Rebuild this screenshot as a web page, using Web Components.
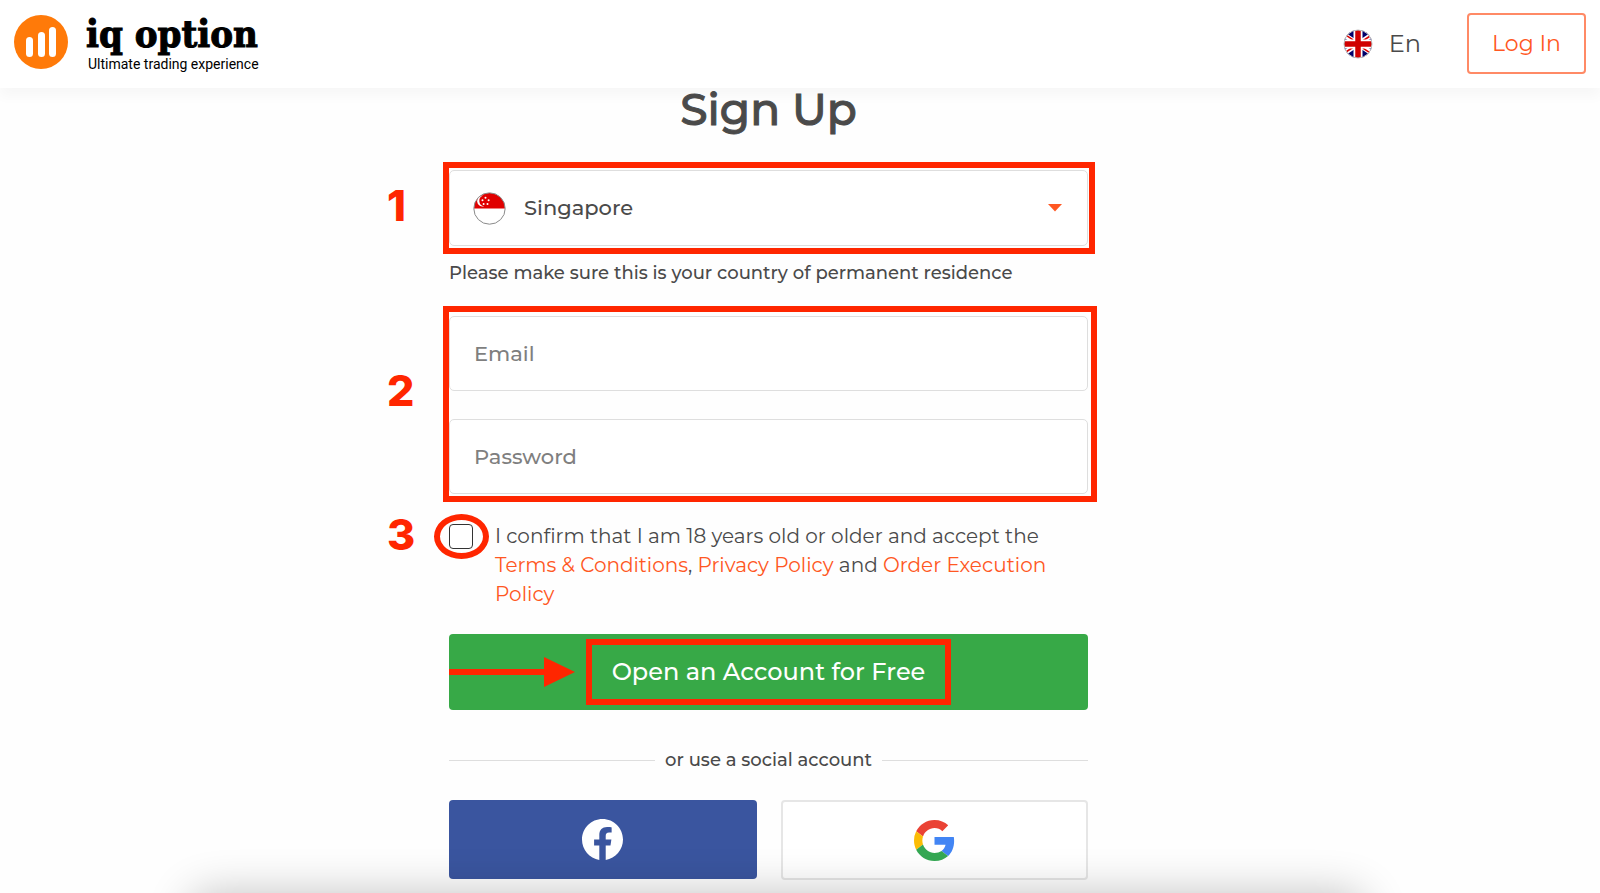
<!DOCTYPE html>
<html lang="en">
<head>
<meta charset="utf-8">
<meta name="viewport" content="width=device-width, initial-scale=1">
<title>Sign Up</title>
<style>
  body {
    --text: #4a4a4a;
    --accent: #ff5722;
    --line: #dedede;
    --mark: #ff2600;
    margin: 0;
    background: #fefefe;
    color: var(--text);
    font-family: Montserrat, Inter, "Open Sans", sans-serif;
    overflow: hidden;
  }
</style>
</head>
<body>
<signup-page></signup-page>

<template id="site-header">
  <style>
    :host {
      display: block;
      background: #fff;
      box-shadow: 0 8px 12px rgba(0, 0, 0, 0.03);
    }
    header {
      display: flex;
      align-items: center;
      justify-content: space-between;
      box-sizing: border-box;
      height: 88px;
      padding: 0 14px 1px;
    }
    .logo {
      display: flex;
      align-items: center;
      gap: 18px;
      color: #000;
      text-decoration: none;
    }
    .logo svg { width: 54px; height: 54px; margin-bottom: 4px; }
    .names { display: flex; flex-direction: column; padding-top: 1px; }
    .word {
      font: bold 38px/40px "DejaVu Serif Condensed", "DejaVu Serif", serif;
      -webkit-text-stroke: 1px #000;
    }
    .tag { font: 14px/20px Roboto, sans-serif; padding-left: 2px; }
    .right { display: flex; align-items: center; gap: 46px; }
    .lang {
      display: flex;
      align-items: center;
      gap: 16px;
      padding: 0;
      border: 0;
      background: none;
      color: inherit;
      font: inherit;
      font-size: 24px;
    }
    .lang svg { width: 30px; height: 30px; }
    .login {
      box-sizing: border-box;
      height: 61px;
      padding: 0 23px;
      border: 2px solid #ff8a66;
      border-radius: 4px;
      color: var(--accent);
      font-size: 22px;
      line-height: 57px;
      text-decoration: none;
    }
  </style>
  <header>
    <a class="logo" href="#">
      <svg viewBox="0 0 54 54" aria-hidden="true">
        <circle cx="27" cy="27" r="27" fill="#ff7a09"/>
        <g fill="#fff">
          <rect x="12" y="22" width="7" height="20" rx="3.5"/>
          <rect x="24" y="17" width="7" height="25" rx="3.5"/>
          <rect x="35" y="12" width="7" height="30" rx="3.5"/>
        </g>
      </svg>
      <span class="names">
        <span class="word">iq option</span>
        <span class="tag">Ultimate trading experience</span>
      </span>
    </a>
    <div class="right">
      <button class="lang" type="button">
        <svg viewBox="0 0 30 30" aria-hidden="true">
          <clipPath id="round"><circle cx="15" cy="15" r="14"/></clipPath>
          <g clip-path="url(#round)">
            <path fill="#00006b" d="M0 0h30v30H0z"/>
            <path stroke="#fff" stroke-width="5" d="M-3 3 33 27M-3 27 33 3"/>
            <path stroke="#d00" stroke-width="1.6" d="M-3 2.200 15 14.200M33 27.800 15 15.800M-3 27 15 15M33 3 15 15"/>
            <path stroke="#fff" stroke-width="9" d="M15 0v30M0 15h30"/>
            <path stroke="#d00000" stroke-width="5.500" d="M15 0v30M0 15h30"/>
          </g>
          <circle cx="15" cy="15" r="14" fill="none" stroke="#bbb"/>
        </svg>
        En
      </button>
      <a class="login" href="#">Log In</a>
    </div>
  </header>
</template>

<!-- Red frame with a step number, drawn over whatever is slotted in -->
<template id="step-mark">
  <style>
    :host { display: block; position: relative; }
    .frame {
      position: absolute;
      inset: -8px -7px -8px -6px;
      border: 6px solid var(--mark);
      pointer-events: none;
    }
    .num {
      position: absolute;
      top: 50%;
      right: 100%;
      width: 62px;
      margin-top: -25px;
      color: var(--mark);
      font: 800 43px/44px Inter, "Liberation Sans", sans-serif;
    }
    :host([tall]) .frame { inset: -10px -9px -8px -6px; }
    :host([tall]) .num { margin-top: -37px; }
    :host([round]) .frame { inset: -10px -16px -10px -15px; border-radius: 50%; }
  </style>
  <slot></slot>
  <span class="frame"></span>
  <span class="num"></span>
</template>

<template id="country-select">
  <style>
    :host {
      display: flex;
      align-items: center;
      box-sizing: border-box;
      height: 76px;
      padding: 0 25px 0 23px;
      gap: 14px;
      border: 1px solid var(--line);
      border-radius: 5px;
      background: #fff;
    }
    .flag { width: 33px; height: 33px; flex: none; }
    .arrow { width: 14px; height: 8px; flex: none; }
    select {
      flex: 1;
      height: 60px;
      padding: 0 4px 2px;
      appearance: none;
      border: 0;
      background: none;
      color: inherit;
      font: inherit;
      font-size: 21px;
      font-weight: 500;
    }
  </style>
  <svg class="flag" viewBox="0 0 33 33" aria-hidden="true">
    <circle cx="16.500" cy="16.500" r="15.500" fill="#fff"/>
    <path fill="#e00000" d="M1 16.500a15.500 15.500 0 0 1 31 0z"/>
    <path fill="#fff" d="M10 3.500a5.500 5.500 0 1 0 1 10.800a5.600 5.600 0 0 1-1-10.800z"/>
    <g fill="#fff">
      <circle cx="12.500" cy="5.800" r="1"/><circle cx="9.500" cy="8.300" r="1"/>
      <circle cx="15.600" cy="8.300" r="1"/><circle cx="10.600" cy="12" r="1"/>
      <circle cx="14.500" cy="12" r="1"/>
    </g>
    <circle cx="16.500" cy="16.500" r="15.700" fill="none" stroke="#8a8a8a"/>
  </svg>
  <select aria-label="Country">
    <option>Singapore</option>
  </select>
  <svg class="arrow" viewBox="0 0 14 8" aria-hidden="true"><path fill="#ff5722" d="M0 0h14L7 7.500z"/></svg>
</template>

<template id="text-field">
  <style>
    :host { display: block; }
    input {
      display: block;
      box-sizing: border-box;
      width: 100%;
      height: 75px;
      padding: 0 24px;
      border: 1px solid var(--line);
      border-radius: 5px;
      background: #fff;
      color: inherit;
      font: inherit;
      font-size: 21px;
      font-weight: 500;
    }
    input::placeholder { color: #7f7f7f; opacity: 1; }
  </style>
  <input>
</template>

<template id="signup-form">
  <style>
    :host { display: block; max-width: 639px; margin: 0 auto; }
    h1 {
      margin: 0 0 40px;
      font-size: 44px;
      line-height: 42px;
      font-weight: 500;
      -webkit-text-stroke: 1px;
      text-align: center;
    }
    .hint { margin: 15px 0 31px; font-size: 18px; line-height: 24px; font-weight: 500; }
    .fields { display: flex; flex-direction: column; gap: 28px; }
    .confirm {
      display: flex;
      align-items: flex-start;
      gap: 22px;
      margin: 28px 0 25px;
      font-size: 20px;
      line-height: 29px;
    }
    .confirm step-mark { margin-top: 2px; }
    .confirm input {
      display: block;
      box-sizing: border-box;
      width: 24px;
      height: 25px;
      margin: 0;
      appearance: none;
      border: 1px solid #333;
      border-radius: 4px;
      background: #fff;
    }
    .confirm a { color: var(--accent); text-decoration: none; }
    .submit {
      position: relative;
      display: flex;
      align-items: center;
      justify-content: center;
      width: 100%;
      height: 76px;
      padding: 0;
      border: 0;
      border-radius: 4px;
      background: #37a947;
      color: #fff;
      font: inherit;
      font-size: 24px;
      line-height: 30px;
      font-weight: 500;
    }
    .submit span { padding: 12px 20px; border: 6px solid var(--mark); }
    .submit svg { position: absolute; left: 0; top: 22px; width: 126px; height: 32px; }
    .or {
      display: flex;
      align-items: center;
      gap: 10px;
      margin: 38px 0 28px;
      font-size: 18px;
      line-height: 24px;
      font-weight: 500;
    }
    .or::before, .or::after { content: ""; flex: 1; height: 1px; background: var(--line); }
    .social { display: grid; grid-template-columns: 1fr 1fr; gap: 24px; }
    .social button {
      display: flex;
      align-items: center;
      justify-content: center;
      box-sizing: border-box;
      height: 80px;
      padding: 0;
      border: 2px solid #e6e6e6;
      border-radius: 4px;
      background: #fff;
    }
    .social .fb { height: 79px; border: 0; background: #3a559f; }
    .social svg { width: 41px; height: 41px; }
  </style>
  <h1>Sign Up</h1>
  <form>
    <step-mark step="1"><country-select></country-select></step-mark>
    <p class="hint">Please make sure this is your country of permanent residence</p>
    <step-mark step="2" tall>
      <div class="fields">
        <text-field type="email" label="Email"></text-field>
        <text-field type="password" label="Password"></text-field>
      </div>
    </step-mark>
    <div class="confirm">
      <step-mark step="3" round><input id="adult" type="checkbox"></step-mark>
      <label for="adult">I confirm that I am 18 years old or older and accept the <a href="#">Terms &amp; Conditions</a>, <a href="#">Privacy Policy</a> and <a href="#">Order Execution Policy</a></label>
    </div>
    <button class="submit" type="button">
      <svg viewBox="0 0 126 32" aria-hidden="true"><path fill="#ff2600" d="M0 13h95V1l31 15-31 15V19H0z"/></svg>
      <span>Open an Account for Free</span>
    </button>
    <div class="or">or use a social account</div>
    <div class="social">
      <button class="fb" type="button" aria-label="Facebook">
        <svg viewBox="0 0 24 24" aria-hidden="true"><path fill="#fff" d="M24 12.070C24 5.400 18.630 0 12 0S0 5.400 0 12.070c0 6.030 4.390 11.020 10.130 11.930v-8.440H7.080v-3.490h3.050V9.410c0-3.020 1.790-4.700 4.530-4.700 1.310 0 2.690.240 2.690.240v2.970h-1.520c-1.490 0-1.950.930-1.950 1.880v2.270h3.320l-.530 3.490h-2.790V24C19.610 23.090 24 18.100 24 12.070z"/></svg>
      </button>
      <button type="button" aria-label="Google">
        <svg viewBox="0 0 48 48" aria-hidden="true">
          <path fill="#ea4335" d="M24 9.500c3.540 0 6.710 1.220 9.210 3.600l6.850-6.850C35.900 2.380 30.470 0 24 0 14.620 0 6.510 5.380 2.560 13.220l7.980 6.190C12.430 13.720 17.740 9.500 24 9.500z"/>
          <path fill="#4285f4" d="M46.980 24.550c0-1.570-.150-3.090-.380-4.550H24v9.020h12.940c-.580 2.960-2.260 5.480-4.780 7.180l7.730 6c4.510-4.180 7.090-10.360 7.090-17.650z"/>
          <path fill="#fbbc05" d="M10.530 28.590A14.500 14.500 0 0 1 9.770 24c0-1.600.270-3.140.760-4.590l-7.980-6.190A23.900 23.900 0 0 0 0 24c0 3.880.920 7.540 2.560 10.780z"/>
          <path fill="#34a853" d="M24 48c6.480 0 11.930-2.130 15.890-5.810l-7.730-6c-2.150 1.450-4.920 2.300-8.160 2.300-6.260 0-11.570-4.220-13.470-9.910l-7.980 6.190C6.510 42.620 14.620 48 24 48z"/>
        </svg>
      </button>
    </div>
  </form>
</template>

<template id="signup-page">
  <style>
    :host { display: block; min-height: 100vh; }
    main { padding: 0 63px 12px 0; }
    /* soft shadow rising from under the bottom edge of the window */
    .glow {
      position: fixed;
      top: 100%;
      left: 190px;
      right: 235px;
      height: 80px;
      border-radius: 20px;
      box-shadow: 0 0 44px rgba(0, 0, 0, 0.24);
      pointer-events: none;
    }
  </style>
  <site-header></site-header>
  <main><signup-form></signup-form></main>
  <div class="glow"></div>
</template>

<script>
(function() {
  class TemplateElement extends HTMLElement {
    constructor() {
      super();
      const template = document.getElementById(this.localName);
      this.attachShadow({ mode: "open" });
      this.shadowRoot.appendChild(template.content.cloneNode(true));
    }
  }

  class StepMark extends TemplateElement {
    connectedCallback() {
      this.shadowRoot.querySelector(".num").textContent = this.getAttribute("step");
    }
  }

  class TextField extends TemplateElement {
    connectedCallback() {
      const input = this.shadowRoot.querySelector("input");
      input.type = this.getAttribute("type") || "text";
      input.placeholder = this.getAttribute("label");
      input.setAttribute("aria-label", this.getAttribute("label"));
    }
  }

  customElements.define("site-header", class extends TemplateElement {});
  customElements.define("step-mark", StepMark);
  customElements.define("country-select", class extends TemplateElement {});
  customElements.define("text-field", TextField);
  customElements.define("signup-form", class extends TemplateElement {});
  customElements.define("signup-page", class extends TemplateElement {});
})();
</script>
</body>
</html>
